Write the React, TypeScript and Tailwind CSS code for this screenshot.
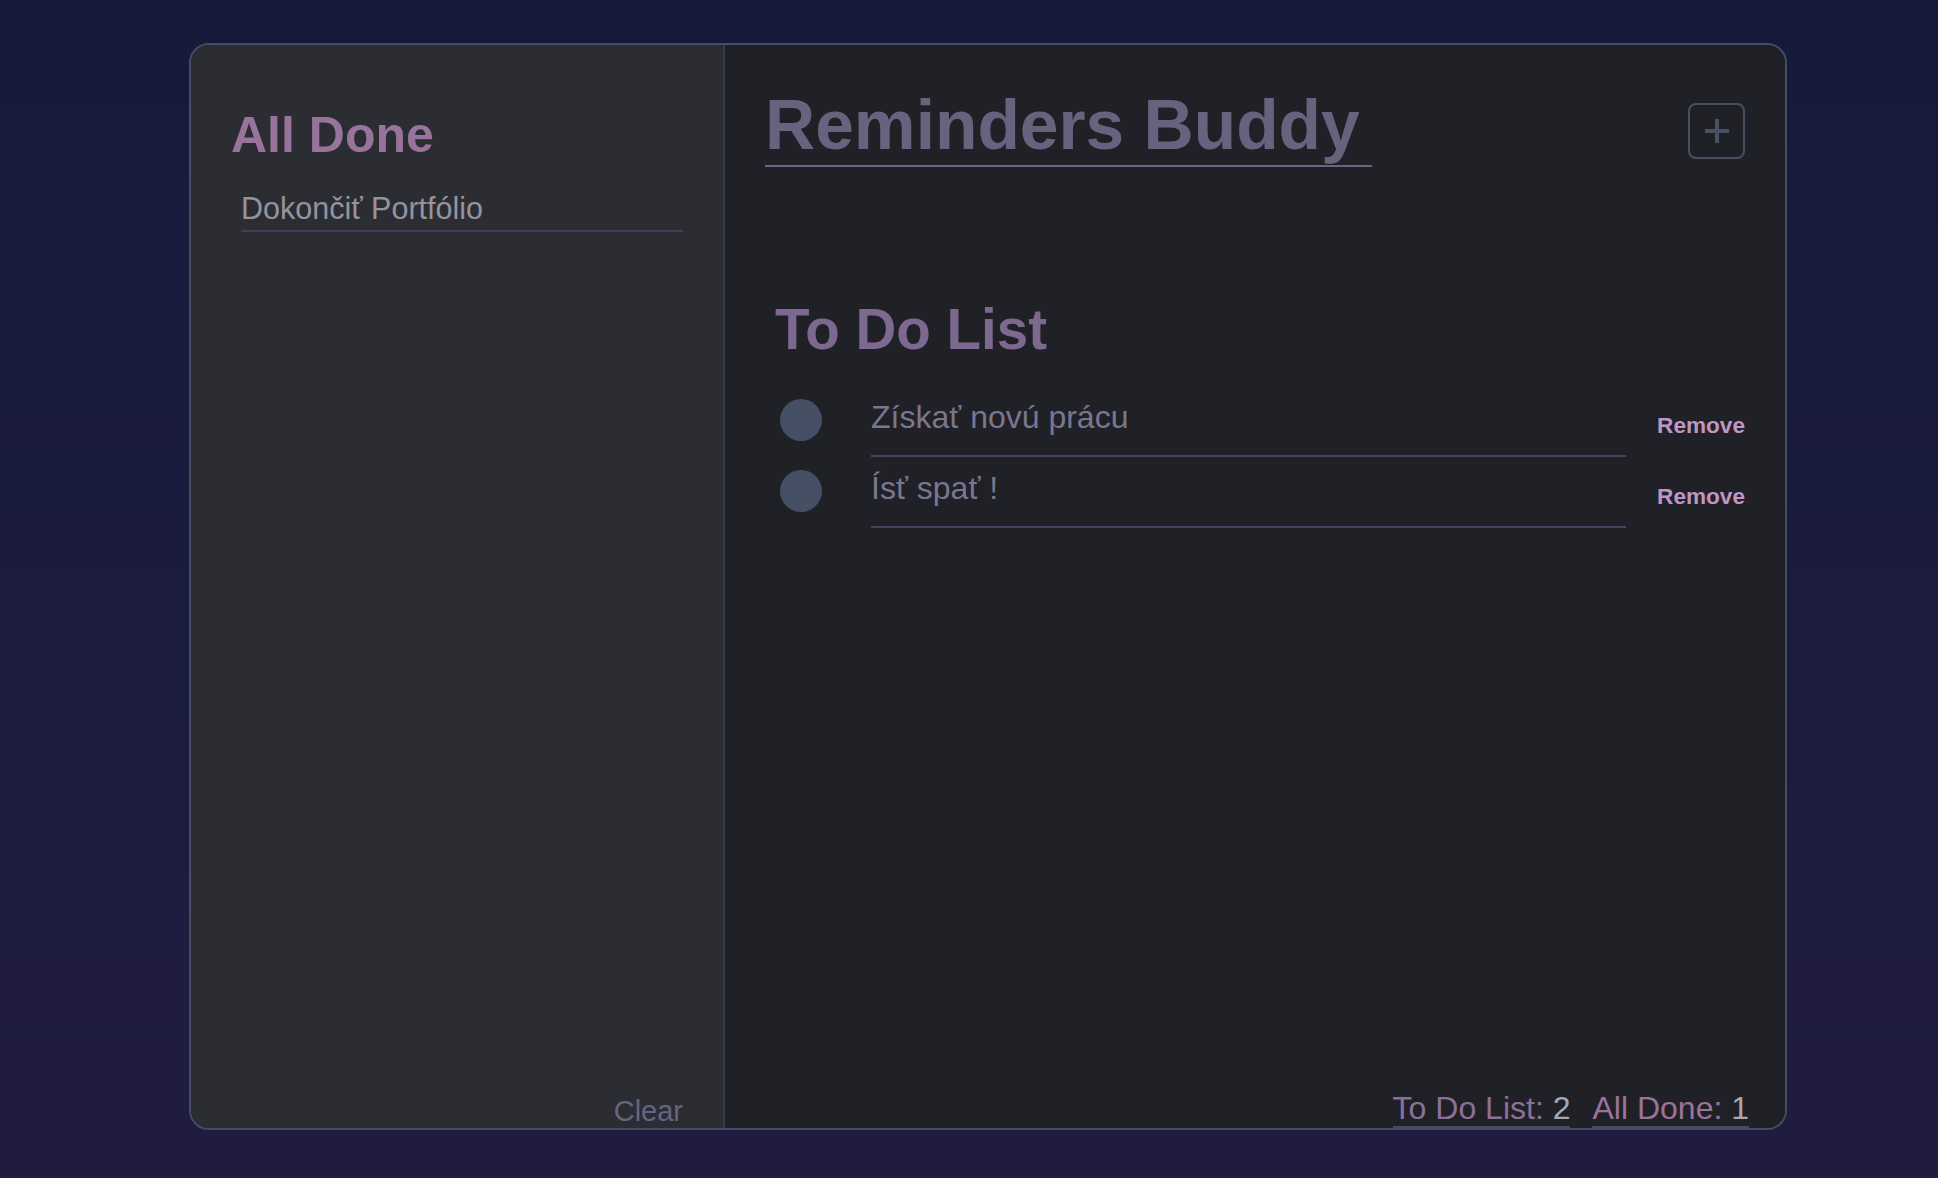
import React from "react";

const todos = ["Získať novú prácu", "Ísť spať !"];
const done = ["Dokončiť Portfólio"];

export default function App() {
  return (
    <div className="min-h-screen w-full bg-gradient-to-b from-[#151a3b] to-[#201c40] pt-[43px] pl-[189px] pb-[48px] font-['Liberation_Sans',Arial,sans-serif]">
      <div className="flex h-[1087px] w-[1598px] overflow-hidden rounded-[20px] border-2 border-[#444e60]">
        {/* Left panel */}
        <div className="flex w-[534px] flex-col border-r-2 border-[#353b4b] bg-[#2c2d32] px-[40px] pt-[62px]">
          <h2 className="text-[50px] font-bold leading-[57px] text-[#98739b]">All Done</h2>
          <ul className="mt-[27px] ml-[10px]">
            {done.map((d) => (
              <li
                key={d}
                className="border-b-2 border-[#4a3a5a] pb-[4px] text-[30.5px] leading-[35px] text-[#96939f]"
              >
                {d}
              </li>
            ))}
          </ul>
          <button className="mt-auto self-end text-[29px] leading-[33px] text-[#67647f]">Clear</button>
        </div>

        {/* Right panel */}
        <div className="flex flex-1 flex-col bg-[#202126] px-[40px] pt-[40px]">
          <div className="flex items-start justify-between">
            <h1 className="border-b-2 border-[#6a6584] pr-[12px] text-[69.5px] font-bold leading-[80px] text-[#66637f]">
              Reminders Buddy
            </h1>
            <button className="mt-[18px] flex h-[56px] w-[57px] items-center justify-center rounded-[8px] border-2 border-[#465063]">
              <svg width="26" height="26" viewBox="0 0 26 26">
                <line x1="13" y1="1" x2="13" y2="25" stroke="#475266" strokeWidth="4" />
                <line x1="1" y1="13" x2="25" y2="13" stroke="#475266" strokeWidth="4" />
              </svg>
            </button>
          </div>

          <h2 className="mt-[131px] ml-[10px] text-[56.5px] font-bold leading-[64px] text-[#7d6890]">To Do List</h2>

          <ul className="mt-[24px]">
            {todos.map((t) => (
              <li key={t} className="flex items-center">
                <span className="ml-[15px] -mt-[4px] h-[42px] w-[42px] shrink-0 rounded-full bg-[#465064]" />
                <div className="ml-[49px] flex-1 border-b-2 border-[#48415f] pt-[13px] pb-[20px] text-[32px] leading-[36px] text-[#7a7690]">
                  {t}
                </div>
                <button className="ml-[31px] mt-[8px] text-[22.6px] font-bold leading-[26px] text-[#bf95c4]">
                  Remove
                </button>
              </li>
            ))}
          </ul>

          <div className="-mr-[4px] mt-auto flex justify-end gap-[22px] text-[32px] leading-[36px]">
            <span className="border-b-2 border-[#4a4666]">
              <span className="text-[#8c709a]">To Do List: </span>
              <span className="text-[#aaa6b4]">{todos.length}</span>
            </span>
            <span className="border-b-2 border-[#4a4666]">
              <span className="text-[#9a739c]">All Done: </span>
              <span className="text-[#aaa6b4]">{done.length}</span>
            </span>
          </div>
        </div>
      </div>
    </div>
  );
}
